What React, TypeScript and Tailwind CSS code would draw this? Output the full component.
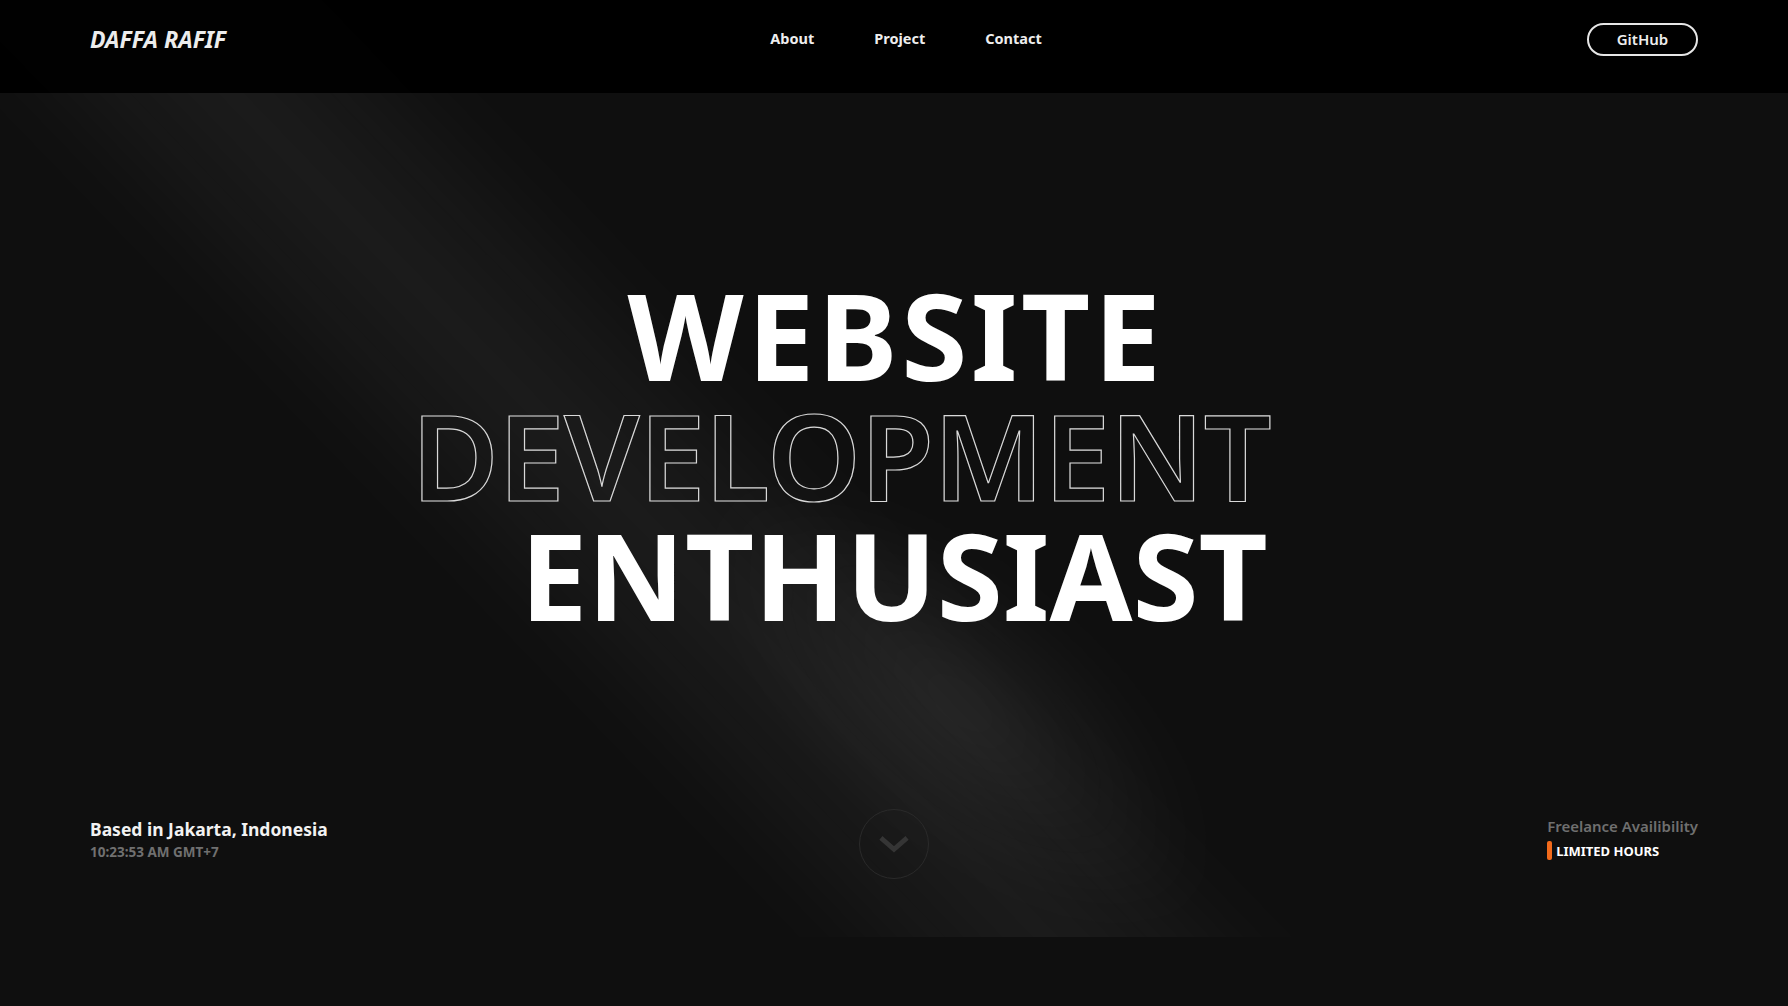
import React from "react";

export default function App() {
  return (
    <div
      className="relative w-full min-h-[1006px] overflow-hidden bg-[#0f0f0f] text-white"
      style={{ fontFamily: '"Noto Sans", "Liberation Sans", sans-serif' }}
    >
      {/* light beam (decorative overlay) */}
      <div className="pointer-events-none absolute left-[478px] top-[-350px] h-[1750px] w-[340px] rotate-[-44deg] bg-[linear-gradient(90deg,rgba(255,255,255,0)_0%,rgba(255,255,255,0.035)_30%,rgba(255,255,255,0.055)_50%,rgba(255,255,255,0.035)_70%,rgba(255,255,255,0)_100%)] blur-[24px]" />

      <header className="relative z-10 flex h-[93px] items-start bg-black/95 px-[90px]">
        <div className="flex h-[78px] w-full items-center justify-between">
          <div className="w-[200px] text-[23px] font-bold italic text-[#ececec]">DAFFA RAFIF</div>
          <nav className="ml-[24px] flex items-center gap-[60px] text-[14.5px] font-bold text-[#eeeeee]">
            <span>About</span>
            <span>Project</span>
            <span>Contact</span>
          </nav>
          <div className="flex w-[200px] justify-end">
            <button className="flex h-[33px] w-[111px] items-center justify-center rounded-full border-2 border-[#e6e6e6] text-[15px] font-semibold text-[#eeeeee]">
              GitHub
            </button>
          </div>
        </div>
      </header>

      <main className="relative flex h-[844px] flex-col">
        <div className="pointer-events-none absolute left-[650px] top-[480px] h-[260px] w-[620px] rotate-[40deg] rounded-full bg-[radial-gradient(ellipse_at_center,rgba(255,255,255,0.07),rgba(255,255,255,0)_70%)] blur-[20px]" />
        <div className="relative flex flex-col items-center pt-[182px] text-[120px] font-bold leading-[120px]">
          <div className="ml-[4px] tracking-[3.5px] text-white">WEBSITE</div>
          <div className="mr-[106px] tracking-[-1px] font-semibold text-transparent [-webkit-text-stroke:1.2px_#d9d9d9]">DEVELOPMENT</div>
          <div className="text-white">ENTHUSIAST</div>
        </div>
        <div className="flex-1" />
        <div className="relative flex items-center justify-between px-[90px] pb-[58px]">
          <div className="mb-[10px] w-[300px]">
            <div className="text-[17.5px] font-bold leading-[24px] text-[#f2f2f2]">Based in Jakarta, Indonesia</div>
            <div className="mt-[2px] text-[13.5px] font-bold leading-[18px] text-[#707070]">10:23:53 AM GMT+7</div>
          </div>
          <div className="flex h-[70px] w-[70px] items-center justify-center rounded-full border border-[#2a2a2a]">
            <svg width="36" height="36" viewBox="0 0 24 24" fill="none" stroke="#353535" strokeWidth="3.2" strokeLinecap="square">
              <path d="M4.5 9l7.5 6.5L19.5 9" />
            </svg>
          </div>
          <div className="mb-[12px] flex w-[300px] flex-col items-end">
            <div>
              <div className="text-[15px] font-semibold leading-[20px] text-[#6f6f6f]">Freelance Availibility</div>
              <div className="mt-[5px] flex items-center gap-[4px]">
                <span className="h-[19px] w-[5px] rounded-[2px] bg-[#f26a1b]" />
                <span className="text-[13px] font-bold leading-[18px] text-white">LIMITED HOURS</span>
              </div>
            </div>
          </div>
        </div>
      </main>
      <div className="relative h-[69px] bg-[#0f0f0f]" />
    </div>
  );
}
